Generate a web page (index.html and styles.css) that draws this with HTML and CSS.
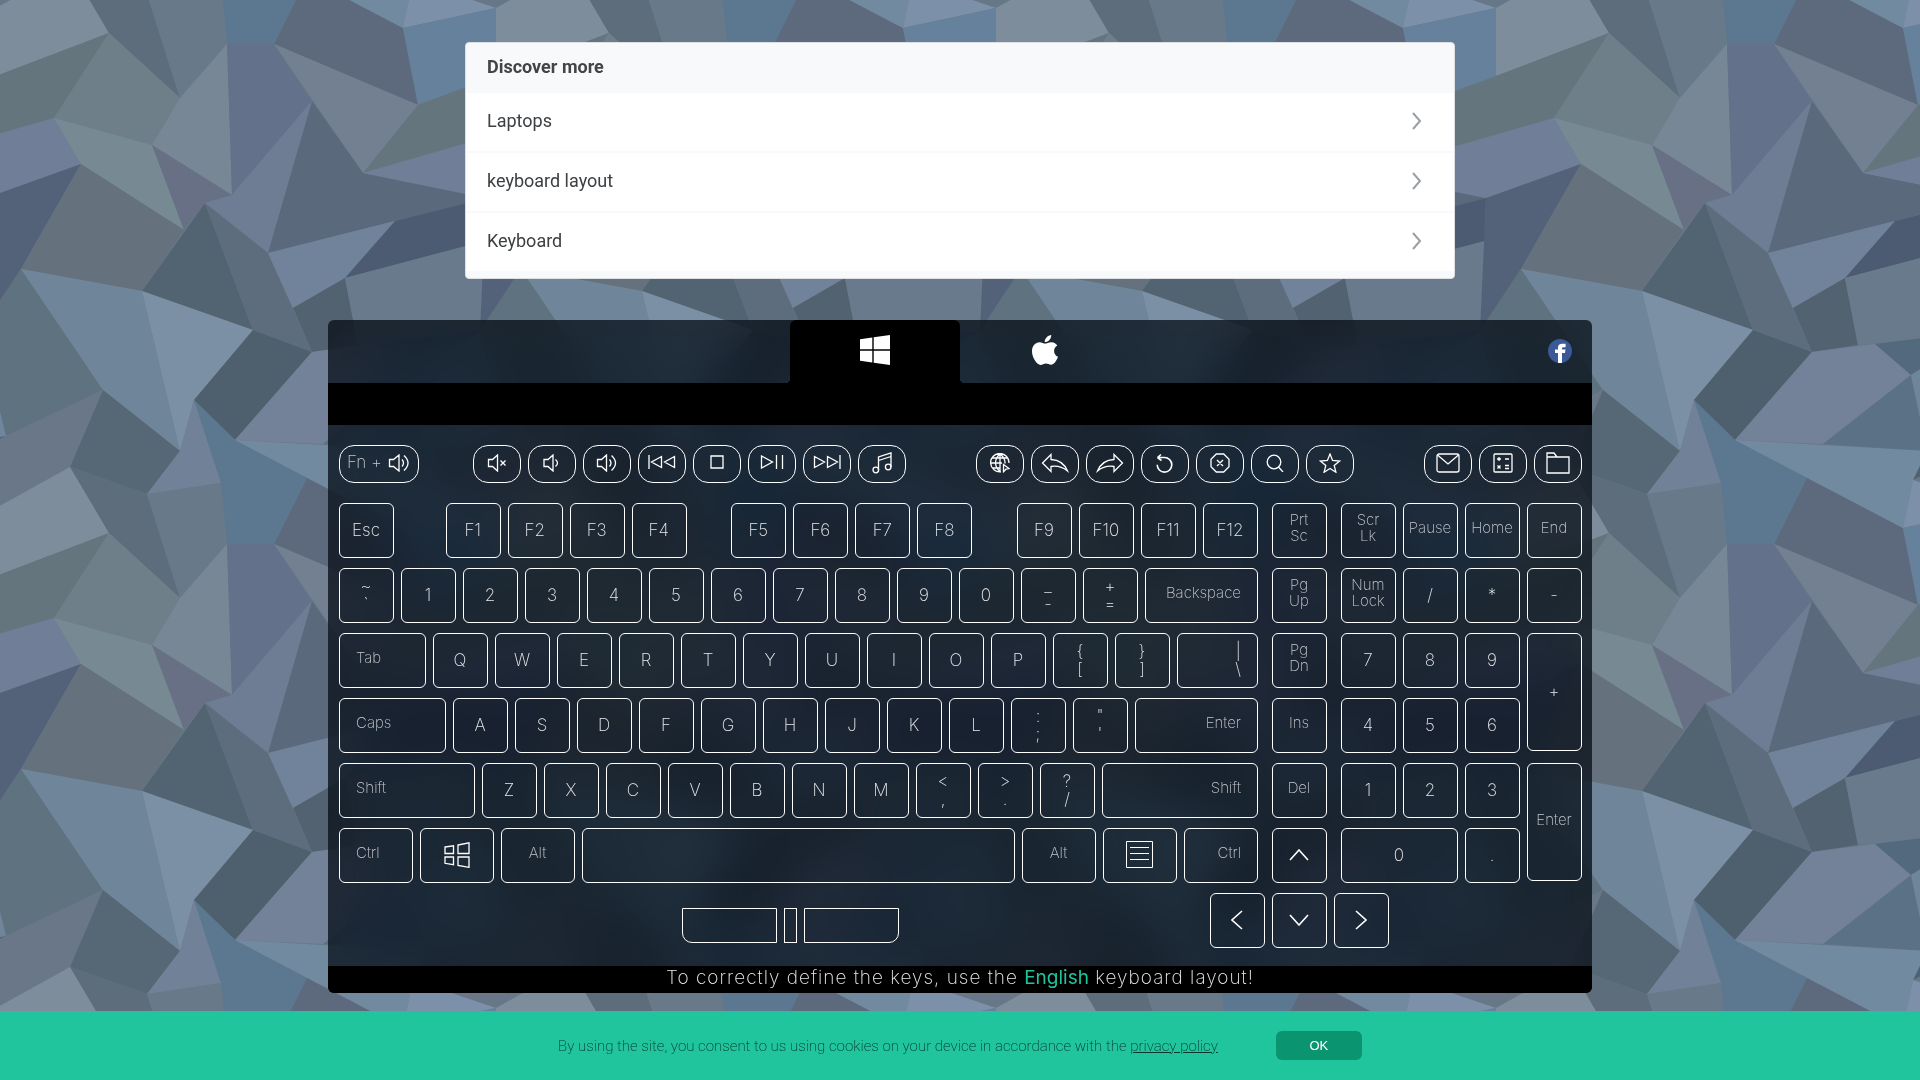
FILE: index.html
```
<!DOCTYPE html>
<html lang="en">
<head>
    <meta charset="UTF-8">
    <meta name="viewport" content="width=device-width, initial-scale=1.0">
    <title>Keyboard test</title>
    <link rel="stylesheet" href="styles.css">
</head>
<body>
    <!-- related links -->
    <nav class="discover">
        <h2>Discover more</h2>
        <a href="#">Laptops <svg width="10" height="18" viewBox="0 0 10 18"><path d="M1 1l7 8-7 8"/></svg></a>
        <a href="#">keyboard layout <svg width="10" height="18" viewBox="0 0 10 18"><path d="M1 1l7 8-7 8"/></svg></a>
        <a href="#">Keyboard <svg width="10" height="18" viewBox="0 0 10 18"><path d="M1 1l7 8-7 8"/></svg></a>
    </nav>

    <main class="keyboard">
        <header class="tabs">
            <a class="tab active" href="#" aria-label="Windows">
                <svg width="30" height="30" viewBox="0 0 30 30" fill="#fff"><path d="M0 4.2L12.3 2.5V14.3H0zM13.7 2.3L30 0V14.3H13.7zM0 15.7H12.3V27.5L0 25.8zM13.7 15.7H30V30L13.7 27.7z"/></svg>
            </a>
            <a class="tab" href="#" aria-label="Mac">
                <svg width="26" height="30" viewBox="0 0 26 30" fill="#fff"><path d="M19.2 0c.3 3.6-2.9 7.3-6.4 7.1C12.400 3.700 15.800.300 19.200 0zM25.300 10.400c-2.100 1.300-3.300 3.200-3.200 5.500 0 2.600 1.600 4.900 3.900 5.800-.8 2.600-2.700 5.800-4.800 7.400-1.800 1.300-3.300.600-4.700 0-1.900-.8-3.500-.7-5.400.100-1.700.7-2.900 1.100-4.400.100C3.400 27.200 0 21.500 0 16.200c0-5.500 3.400-9 7.600-9 2.300 0 3.900 1.400 5.600 1.400 1.500 0 3.500-1.600 6.500-1.400 2.400.2 4.300 1.200 5.600 3.200z"/></svg>
            </a>
            <a class="share" href="#" aria-label="Share on Facebook">
                <svg width="24" height="24" viewBox="0 0 24 24"><circle cx="12" cy="12" r="12" fill="#3b5998"/><path fill="#fff" d="M10 24v-10H7v-3.600h3V8.500C10 5.800 11.600 4.700 14 4.700h3.600v3.500h-2.200c-1 0-1.400.4-1.400 1.300v.9h3.500L17 14h-3v10z"/></svg>
            </a>
        </header>
        <div class="screen"></div>

        <div class="keys">
            <!-- multimedia keys -->
            <div class="row media">
                <button class="fn"><span>Fn +</span> <svg width="22" height="18" viewBox="0 0 22 18"><path d="M1.500 5.500h4L11 1v16l-5.500-4.500h-4zM14 5.500q3 3.500 0 7M16 1.500q8 7.500 0 15"/></svg></button>
                <div class="group group-player">
                    <button aria-label="Mute"><svg width="20" height="18" viewBox="0 0 20 18"><path d="M1.500 5.500h4L10.500 1v16l-5-4.500h-4zM13.500 6.500l5 5M18.500 6.500l-5 5"/></svg></button>
                    <button aria-label="Volume down"><svg width="20" height="18" viewBox="0 0 20 18"><path d="M2 5.500h4L11 1v16l-5-4.500H2zM13.500 5.500q4 3.500 0 7"/></svg></button>
                    <button aria-label="Volume up"><svg width="22" height="18" viewBox="0 0 22 18"><path d="M1.500 5.500h4L10.500 1v16l-5-4.500h-4zM13.500 5.500q3 3.500 0 7M15.500 1.500q8 7.500 0 15"/></svg></button>
                    <button class="high" aria-label="Previous"><svg width="28" height="14" viewBox="0 0 28 14"><path d="M1 0v14M13.500 1.500v11L3.500 7zM26.500 1.500v11L16.500 7z"/></svg></button>
                    <button class="high" aria-label="Stop"><svg width="14" height="14" viewBox="0 0 14 14"><path d="M1 1h12v12H1z"/></svg></button>
                    <button class="high" aria-label="Play"><svg width="24" height="14" viewBox="0 0 24 14"><path d="M1.500 1v12l11-6zM16.500 0v14M22.500 0v14"/></svg></button>
                    <button class="high" aria-label="Next"><svg width="28" height="14" viewBox="0 0 28 14"><path d="M27 0v14M1.500 1.500v11L11.500 7zM14.500 1.500v11L24.500 7z"/></svg></button>
                    <button aria-label="Music"><svg width="20" height="22" viewBox="0 0 20 22"><path d="M6.500 18V5L19 1v14M6.500 8.500L19 4.500"/><circle cx="3.800" cy="18" r="2.800"/><circle cx="16.200" cy="15" r="2.800"/></svg></button>
                </div>
                <div class="group group-browser">
                    <button aria-label="Browser"><svg width="20" height="20" viewBox="0 0 20 20"><path d="M11 18.800A9.200 9.200 0 1 1 19 10M10 .8v18M10 .8q-9 9 0 18M10 .8q5.500 5 5 9.700M2.500 5h15M1 10h11M2.500 15H10M13.500 11.500l5.500 4-3 .7-2.500 2.500z"/></svg></button>
                    <button aria-label="Back"><svg width="28" height="20" viewBox="0 0 28 20"><path d="M10 1.500L1.500 10l8.500 8.500v-5q9-1.500 16.500 4.500Q22 7 10 6.500z"/></svg></button>
                    <button aria-label="Forward"><svg width="28" height="20" viewBox="0 0 28 20"><path d="M18 1.500l8.500 8.500-8.500 8.500v-5q-9-1.500-16.500 4.500Q6 7 18 6.500z"/></svg></button>
                    <button aria-label="Refresh"><svg class="bold" width="20" height="20" viewBox="0 0 20 20"><path d="M2.500 4.500l3.500-3M2.500 4.500l4 3M2.500 4.500h7a7.300 7.300 0 1 1-7.300 7.300"/></svg></button>
                    <button aria-label="Cancel"><svg width="20" height="20" viewBox="0 0 20 20"><path d="M6.300 1h7.400L19 6.300v7.400L13.700 19H6.300L1 13.700V6.300zM7 7l6 6M13 7l-6 6"/></svg></button>
                    <button aria-label="Search"><svg width="18" height="18" viewBox="0 0 18 18"><circle cx="8" cy="8" r="6.800"/><path d="M12.500 13l4.500 5"/></svg></button>
                    <button aria-label="Favorites"><svg width="22" height="20" viewBox="0 0 22 20"><path d="M11 1l2.600 6.500 7 .5-5.400 4.500 1.700 6.700L11 15.500l-5.900 3.700 1.700-6.700L1.400 8l7-.5z"/></svg></button>
                </div>
                <div class="group group-apps">
                    <button aria-label="Mail"><svg width="24" height="20" viewBox="0 0 24 20"><rect x="1" y="1" width="22" height="18" rx="2"/><path d="M1.500 2L12 11 22.500 2"/></svg></button>
                    <button aria-label="Calculator"><svg width="20" height="20" viewBox="0 0 20 20"><rect x="1" y="1" width="18" height="18" rx="1"/><path d="M6 4v4M4 6h4M12 6h4M4.500 12.500l3 3M7.500 12.500l-3 3M12 12.500h4M12 15.500h4"/></svg></button>
                    <button aria-label="Files"><svg width="24" height="22" viewBox="0 0 24 22"><path d="M1 21V1h7l3 4h12v16zM1 5h10"/></svg></button>
                </div>
            </div>

            <div class="blocks">
                <div class="main">
                    <div class="row row-f">
                        <button class="esc">Esc</button>
                        <div class="group"><button>F1</button><button>F2</button><button>F3</button><button>F4</button></div>
                        <div class="group"><button>F5</button><button>F6</button><button>F7</button><button>F8</button></div>
                        <div class="group"><button>F9</button><button>F10</button><button>F11</button><button>F12</button></div>
                    </div>
                    <div class="row">
                        <button class="double">~<br>`</button>
                        <button>1</button><button>2</button><button>3</button><button>4</button><button>5</button>
                        <button>6</button><button>7</button><button>8</button><button>9</button><button>0</button>
                        <button class="double">_<br>-</button>
                        <button class="double">+<br>=</button>
                        <button class="name right">Backspace</button>
                    </div>
                    <div class="row">
                        <button class="name left w-tab">Tab</button>
                        <button>Q</button><button>W</button><button>E</button><button>R</button><button>T</button>
                        <button>Y</button><button>U</button><button>I</button><button>O</button><button>P</button>
                        <button class="double">{<br>[</button>
                        <button class="double">}<br>]</button>
                        <button class="double right">|<br>\</button>
                    </div>
                    <div class="row">
                        <button class="name left w-caps">Caps</button>
                        <button>A</button><button>S</button><button>D</button><button>F</button><button>G</button>
                        <button>H</button><button>J</button><button>K</button><button>L</button>
                        <button class="double">:<br>;</button>
                        <button class="double">"<br>'</button>
                        <button class="name right">Enter</button>
                    </div>
                    <div class="row">
                        <button class="name left w-shift">Shift</button>
                        <button>Z</button><button>X</button><button>C</button><button>V</button><button>B</button>
                        <button>N</button><button>M</button>
                        <button class="double">&lt;<br>,</button>
                        <button class="double">&gt;<br>.</button>
                        <button class="double">?<br>/</button>
                        <button class="name right">Shift</button>
                    </div>
                    <div class="row">
                        <button class="name left w-ctrl">Ctrl</button>
                        <button class="w-ctrl" aria-label="Windows"><svg width="26" height="26" viewBox="0 0 26 26"><path d="M1 5l8.500-1.200v7.700H1zM14 3l11-2.200v10.700H14zM1 15h8.500v7.700L1 21.300zM14 15h11v10.300L14 23.500z"/></svg></button>
                        <button class="name w-ctrl">Alt</button>
                        <button class="space" aria-label="Space"></button>
                        <button class="name w-ctrl">Alt</button>
                        <button class="w-ctrl" aria-label="Menu"><svg class="thin" width="27" height="27" viewBox="0 0 27 27"><path d="M.5.500h26v26H.5zM4 6.500h19M4 12.500h19M4 18.500h19"/></svg></button>
                        <button class="name w-ctrl right">Ctrl</button>
                    </div>
                </div>

                <div class="side">
                    <button class="name">Prt<br>Sc</button>
                    <button class="name">Pg<br>Up</button>
                    <button class="name">Pg<br>Dn</button>
                    <button class="name">Ins</button>
                    <button class="name">Del</button>
                    <button aria-label="Up"><svg class="bold" width="20" height="12" viewBox="0 0 20 12"><path d="M1 11l9-10 9 10"/></svg></button>
                </div>

                <div class="numpad">
                    <button class="name">Scr<br>Lk</button>
                    <button class="name">Pause</button>
                    <button class="name">Home</button>
                    <button class="name">End</button>
                    <button class="name">Num<br>Lock</button>
                    <button>/</button>
                    <button>*</button>
                    <button>-</button>
                    <button>7</button>
                    <button>8</button>
                    <button>9</button>
                    <button class="tall">+</button>
                    <button>4</button>
                    <button>5</button>
                    <button>6</button>
                    <button>1</button>
                    <button>2</button>
                    <button>3</button>
                    <button class="name tall">Enter</button>
                    <button class="zero">0</button>
                    <button>.</button>
                </div>
            </div>

            <div class="row bottom">
                <div class="mouse">
                    <button class="mouse-left" aria-label="Left mouse button"></button>
                    <button class="wheel" aria-label="Mouse wheel"></button>
                    <button class="mouse-right" aria-label="Right mouse button"></button>
                </div>
                <div class="group">
                    <button aria-label="Left"><svg class="bold" width="12" height="20" viewBox="0 0 12 20"><path d="M11 1L1 10l10 9"/></svg></button>
                    <button aria-label="Down"><svg class="bold" width="20" height="12" viewBox="0 0 20 12"><path d="M1 1l9 10 9-10"/></svg></button>
                    <button aria-label="Right"><svg class="bold" width="12" height="20" viewBox="0 0 12 20"><path d="M1 1l10 9-10 9"/></svg></button>
                </div>
            </div>
        </div>

        <p class="hint">To correctly define the keys, use the <b>English</b> keyboard layout!</p>
    </main>

    <div class="cookie">
        <p>By using the site, you consent to us using cookies on your device in accordance with the <a href="#">privacy policy</a></p>
        <button>OK</button>
    </div>
</body>
</html>
```

FILE: styles.css
```
* {
    box-sizing: border-box;
}

body {
    margin: 0;
    padding-top: 42px;
    min-height: 100vh;
    font-family: Roboto, Arial, sans-serif;
    background-color: #667888;
    /* 500x500 seamless polygon tile, shapes that cross an edge are repeated with <use> */
    background-image: url("data:image/svg+xml,%3Csvg xmlns='http://www.w3.org/2000/svg' xmlns:xlink='http://www.w3.org/1999/xlink' width='500' height='500'%3E%3Cdefs%3E%3Cg id='t' stroke-width='.5'%3E%3Cpath fill='%237d8d9b' d='M-4 8L-4 76 109 33 90 0 70-33z'/%3E%3Cpath fill='%235e6d7b' d='M70-33L109 33 180 98 147-6z'/%3E%3Cpath fill='%23687989' d='M147-6L180 98 227 44 221-17z'/%3E%3Cpath fill='%235c7890' d='M221-17L227 44H274L307-22 235-60 194-100z'/%3E%3Cpath fill='%235d6a7d' d='M307-22L274 44 418 105 403 28z'/%3E%3Cpath fill='%23728aa0' d='M235-60L403 28 413-20 427-49z'/%3E%3Cpath fill='%237c90a9' d='M413-20L403 28 496 8z'/%3E%3Cpath fill='%2366819c' d='M403 28L418 105 496 76V8z'/%3E%3Cpath fill='%2365757e' d='M-4 76L109 33 54 118-137 173-82 105z'/%3E%3Cpath fill='%236f7f8a' d='M109 33L54 118 152 145 180 98z'/%3E%3Cpath fill='%23778795' d='M180 98L152 145 232 195 227 44z'/%3E%3Cpath fill='%2364718a' d='M227 44L232 195 312 101 274 44z'/%3E%3Cpath fill='%23728092' d='M274 44L363 173 418 105z'/%3E%3Cpath fill='%23707f97' d='M54 118L-137 173-14 198 81 164z'/%3E%3Cpath fill='%23778a94' d='M54 118L81 164 184 230 152 145z'/%3E%3Cpath fill='%23687085' d='M152 145L184 230 205 203 232 195z'/%3E%3Cpath fill='%236e7d94' d='M312 101L232 195 205 203 268 253z'/%3E%3Cpath fill='%235b697c' d='M312 101L268 253 395 221 486 198 363 173z'/%3E%3Cpath fill='%23536279' d='M81 164L-14 198-20 331 21 269z'/%3E%3Cpath fill='%2365727e' d='M81 164L21 269 142 291 184 230z'/%3E%3Cpath fill='%23526372' d='M205 203L142 291 253 330z'/%3E%3Cpath fill='%235d6d7e' d='M205 203L253 330 312 352 268 253z'/%3E%3Cpath fill='%2371839a' d='M268 253L293 308 345 278 395 221z'/%3E%3Cpath fill='%234d5b72' d='M395 221L345 278 485 241 486 198z'/%3E%3Cpath fill='%23536270' d='M345 278L293 308 312 352 358 345z'/%3E%3Cpath fill='%23687a8b' d='M345 278L358 345 480 331 485 241z'/%3E%3Cpath fill='%235e7280' d='M21 269L-20 331 6 436 103 390z'/%3E%3Cpath fill='%236f869a' d='M21 269L103 390 180 451 142 291z'/%3E%3Cpath fill='%237b90a4' d='M142 291L180 451 194 400 253 330z'/%3E%3Cpath fill='%234e5f6e' d='M253 330L194 400 235 440 312 352z'/%3E%3Cpath fill='%23738299' d='M312 352L235 440 323 444 411 375 375 344z'/%3E%3Cpath fill='%2353697d' d='M375 344L411 375 480 365V331z'/%3E%3Cpath fill='%235b7186' d='M411 375L323 444 427 451z'/%3E%3Cpath fill='%236e859b' d='M411 375L427 451 506 436 480 331z'/%3E%3Cpath fill='%234f6070' d='M427 451L413 480 506 436z'/%3E%3Cpath fill='%23697789' d='M6 436L-87 480-4 508 70 467 103 390z'/%3E%3Cpath fill='%23566776' d='M103 390L70 467 147 494 180 451z'/%3E%3Cpath fill='%23718298' d='M194 400L180 451 147 494 221 483z'/%3E%3C/g%3E%3Cg id='r'%3E%3Cuse xlink:href='%23t'/%3E%3Cuse xlink:href='%23t' x='500'/%3E%3Cuse xlink:href='%23t' x='-500'/%3E%3C/g%3E%3C/defs%3E%3Crect width='500' height='500' fill='%23667888'/%3E%3Cuse xlink:href='%23r'/%3E%3Cuse xlink:href='%23r' y='500'/%3E%3C/svg%3E");
}

a {
    color: inherit;
    text-decoration: none;
}

button {
    font: inherit;
    color: inherit;
    cursor: pointer;
}

svg {
    display: block;
    flex: none;
}

/* Discover more */
.discover {
    width: 90%;
    max-width: 990px;
    margin: 0 auto;
    padding-bottom: 7px;
    border: 1px solid #dcdfe3;
    border-radius: 4px;
    background-color: #f8f9fb;
    overflow: hidden;
    font-size: 18px;
    color: #3c4043;
}

.discover h2 {
    margin: 0;
    padding: 0 21px;
    font-size: 18px;
    line-height: 48px;
    padding-bottom: 2px;
    color: #444;
}

.discover a {
    display: flex;
    justify-content: space-between;
    align-items: center;
    height: 58px;
    padding: 0 32px 3px 21px;
    background-color: #fff;
}

.discover a + a {
    margin-top: 2px;
}

.discover svg {
    fill: none;
    stroke: #9aa0a6;
    stroke-width: 2;
}

/* Keyboard */
.keyboard {
    max-width: 1264px;
    margin: 41px auto 87px;
    border-radius: 6px;
    overflow: hidden;
    background-color: rgba(0, 4, 10, 0.7);
    backdrop-filter: blur(24px) saturate(1.6);
    font-family: Inter, "Liberation Sans", sans-serif;
    font-weight: 200;
    color: #e8eaec;
}

.tabs {
    position: relative;
    display: flex;
    justify-content: center;
}

.tab {
    position: relative;
    display: flex;
    justify-content: center;
    width: 170px;
    height: 63px;
    padding-top: 15px;
}

.tab.active {
    background-color: #000;
    border-radius: 6px 6px 0 0;
}

/* curved feet of the open tab */
.tab.active::before,
.tab.active::after {
    content: "";
    position: absolute;
    bottom: 0;
    width: 4px;
    height: 4px;
}

.tab.active::before {
    right: 100%;
    background: radial-gradient(circle at 0 0, transparent 4px, #000 4px);
}

.tab.active::after {
    left: 100%;
    background: radial-gradient(circle at 100% 0, transparent 4px, #000 4px);
}

.share {
    position: absolute;
    top: 19px;
    right: 20px;
}

.screen {
    height: 42px;
    background-color: #000;
}

.keys {
    padding: 20px 10px 18px 11px;
}

.keys button {
    display: flex;
    justify-content: center;
    align-items: center;
    flex: none;
    width: 55px;
    height: 55px;
    padding: 0 1px 2px 0;
    background: none;
    border: 1px solid #fff;
    border-radius: 6px;
    font-size: 17px;
}

.keys svg {
    fill: none;
    stroke: #fff;
    stroke-width: 1.3;
}

.keys svg.thin {
    stroke-width: 1;
}

.keys svg.bold {
    stroke-width: 1.6;
}

.row,
.group,
.mouse {
    display: flex;
    gap: 7px;
}

.media {
    margin-bottom: 20px;
}

.keys .media button {
    width: 48px;
    height: 38px;
    border-radius: 15px;
}

.keys .media .fn {
    width: 80px;
    gap: 6px;
    color: #c4c8cc;
}

.fn span {
    padding-bottom: 2px;
}

.keys .media .high {
    padding-bottom: 4px;
}

.group-player {
    margin-left: 47px;
}

.group-browser {
    margin-left: 63px;
}

.group-apps {
    margin-left: auto;
}

.blocks {
    display: flex;
    gap: 14px;
    margin-bottom: 10px;
}

.main {
    flex: 1;
    display: flex;
    flex-direction: column;
    gap: 10px;
}

.row-f {
    justify-content: space-between;
}

.esc {
    margin-right: 7px;
}

.keys .name {
    padding-bottom: 5px;
    font-size: 15px;
    line-height: 16px;
    color: #c4c8cc;
}

.keys .double {
    line-height: 18px;
}

.keys .left {
    justify-content: flex-start;
    padding-left: 16px;
}

.keys .right {
    flex: 1;
    justify-content: flex-end;
    padding-right: 16px;
}

.keys .w-tab {
    width: 87px;
}

.keys .w-caps {
    width: 107px;
}

.keys .w-shift {
    width: 136px;
}

.keys .w-ctrl {
    flex: none;
    width: 74px;
}

.keys .space {
    flex: 1;
}

.side {
    display: flex;
    flex-direction: column;
    gap: 10px;
}

.numpad {
    display: grid;
    grid-template-columns: repeat(4, 55px);
    grid-auto-rows: 55px;
    gap: 10px 7px;
}

.keys .tall {
    grid-column: 4;
    grid-row: span 2;
    height: 118px;
}

.keys .zero {
    grid-column: span 2;
    width: 117px;
}

.bottom {
    justify-content: flex-end;
    align-items: center;
    padding-right: 193px;
}

.mouse {
    margin: 10px auto 0 343px;
}

.keys .mouse button {
    width: 95px;
    height: 35px;
    border-radius: 0;
}

.keys .mouse .mouse-left {
    border-bottom-left-radius: 10px;
}

.keys .mouse .mouse-right {
    border-bottom-right-radius: 10px;
}

.keys .mouse .wheel {
    width: 13px;
}

.hint {
    margin: 0;
    background-color: #000;
    text-align: center;
    font-size: 19px;
    line-height: 23px;
    padding-bottom: 4px;
    letter-spacing: 1px;
}

.hint b {
    font-weight: 400;
    color: #20c59d;
    letter-spacing: 0;
}

/* Cookie bar */
.cookie {
    position: fixed;
    bottom: 0;
    left: 0;
    right: 0;
    display: flex;
    justify-content: center;
    align-items: center;
    gap: 58px;
    height: 69px;
    background-color: #20c59d;
    font-size: 15px;
    font-weight: 200;
    color: #04382c;
}

.cookie p {
    margin: 0;
}

.cookie a {
    text-decoration: underline;
}

.cookie button {
    width: 86px;
    height: 29px;
    border: none;
    border-radius: 6px;
    background-color: #0a9470;
    color: #fff;
    font-family: "Liberation Sans", Arial, sans-serif;
    font-size: 13px;
    font-weight: 400;
}
```
